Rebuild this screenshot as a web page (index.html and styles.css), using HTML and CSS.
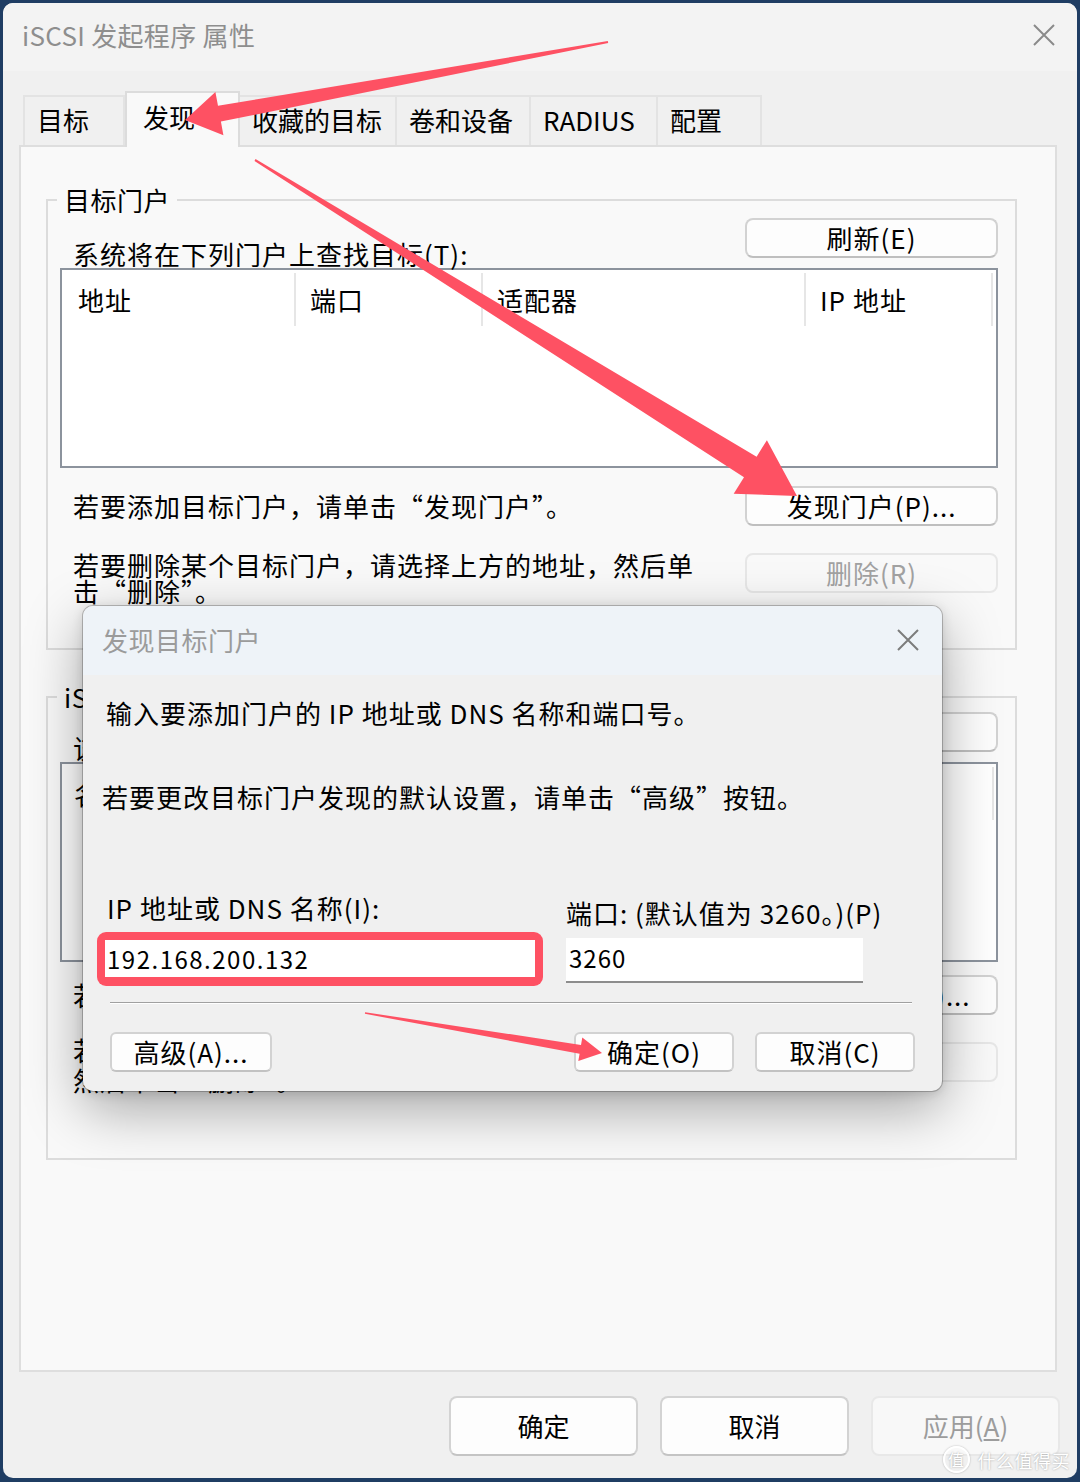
FILE: index.html
```html
<!DOCTYPE html>
<html lang="zh-CN">
<head>
<meta charset="utf-8">
<title>iSCSI 发起程序 属性</title>
<link rel="stylesheet" href="styles.css">
</head>
<body>
<div class="window">
  <header class="titlebar">
    <span class="title">iSCSI 发起程序 属性</span>
    <svg class="close" viewBox="0 0 22 22"><path d="M1 1L21 21M21 1L1 21"/></svg>
  </header>

  <div class="client">
    <nav class="tabs">
      <div class="tab">目标</div>
      <div class="tab tab--active">发现</div>
      <div class="tab">收藏的目标</div>
      <div class="tab">卷和设备</div>
      <div class="tab">RADIUS</div>
      <div class="tab">配置</div>
    </nav>

    <section class="panel">
      <fieldset class="group">
        <legend>目标门户</legend>
        <div class="row row--head">
          <span class="hint">系统将在下列门户上查找目标(T):</span>
          <button class="btn">刷新(E)</button>
        </div>
        <div class="list">
          <div class="list-head">
            <span class="col col--addr">地址</span>
            <span class="col col--port">端口</span>
            <span class="col col--adapter">适配器</span>
            <span class="col col--ip">IP 地址</span>
          </div>
        </div>
        <div class="row row--add">
          <span class="hint">若要添加目标门户，请单击“发现门户”。</span>
          <button class="btn">发现门户(P)...</button>
        </div>
        <div class="row row--del">
          <span class="hint hint--wrap">若要删除某个目标门户，请选择上方的地址，然后单击“删除”。</span>
          <button class="btn" disabled>删除(R)</button>
        </div>
      </fieldset>

      <fieldset class="group group--isns">
        <legend>iSNS 服务器</legend>
        <div class="row row--head">
          <span class="hint">该系统已在下列 iSNS 服务器上注册(I):</span>
          <button class="btn">刷新(F)</button>
        </div>
        <div class="list">
          <div class="list-head">
            <span class="col col--name">名称</span>
          </div>
        </div>
        <div class="row row--add">
          <span class="hint">若要添加 iSNS 服务器，请单击“添加服务器”。</span>
          <button class="btn">添加服务器(D)...</button>
        </div>
        <div class="row row--del">
          <span class="hint hint--wrap">若要删除某个 iSNS 服务器，请选择上方的服务器，<br>然后单击“删除”。</span>
          <button class="btn" disabled>删除(M)</button>
        </div>
      </fieldset>
    </section>

    <footer class="actions">
      <button class="fbtn">确定</button>
      <button class="fbtn">取消</button>
      <button class="fbtn" disabled>应用(<u>A</u>)</button>
    </footer>
  </div>

  <div class="dialog">
    <div class="dlg-title">
      <span class="dlg-caption">发现目标门户</span>
      <svg class="dlg-close" viewBox="0 0 22 22"><path d="M1 1L21 21M21 1L1 21"/></svg>
    </div>
    <div class="dlg-body">
      <p class="dlg-text dlg-text--first">输入要添加门户的 IP 地址或 DNS 名称和端口号。</p>
      <p class="dlg-text dlg-text--second">若要更改目标门户发现的默认设置，请单击“高级”按钮。</p>
      <div class="fields">
        <div class="field field--ip">
          <label class="field-label">IP 地址或 DNS 名称(I):</label>
          <div class="mark"><div class="input input--ip">192.168.200.132</div></div>
        </div>
        <div class="field field--port">
          <label class="field-label">端口: (默认值为 3260。)(P)</label>
          <div class="input input--port">3260</div>
        </div>
      </div>
      <div class="sep"></div>
      <div class="dlg-actions">
        <button class="dbtn">高级(A)...</button>
        <button class="dbtn dbtn--push">确定(O)</button>
        <button class="dbtn">取消(C)</button>
      </div>
    </div>
  </div>

  <div class="watermark">
    <span class="wm-badge">值</span>
    <span class="wm-text">什么值得买</span>
  </div>
</div>

<svg class="marks" viewBox="0 0 1080 1482" width="1080" height="1482">
  <polygon points="607.8,41 218,105.8 215.4,92 185,120 223.4,135.3 220.9,121.6 608.2,43"/>
  <polygon points="255.5,159.1 756.6,456.8 766.9,440.2 797,496 733.7,493.8 744,477.2 254.5,160.9"/>
  <polygon points="365.1,1012.2 581,1044.9 582.3,1037.5 602,1053 578.3,1061.1 579.6,1053.7 364.9,1013.8"/>
</svg>
</body>
</html>
```

FILE: styles.css
```css
* { box-sizing: border-box; }

html, body { margin: 0; }

body {
  position: relative;
  width: 1080px;
  height: 1482px;
  overflow: hidden;
  background: #1f3d63;
  font-family: "Noto Sans CJK SC", "Noto Sans", sans-serif;
  color: #000;
}

button { font-family: inherit; color: inherit; padding: 0; }

/* ---------- main window ---------- */
.window {
  position: relative;
  margin: 3px 0 0 3px;
  width: 1074px;
  height: 1475px;
  background: #f0f0f0;
  border-radius: 10px;
  overflow: hidden;
  display: flex;
  flex-direction: column;
}

.titlebar {
  flex: none;
  height: 68px;
  background: #f3f3f3;
  display: flex;
  align-items: center;
  justify-content: space-between;
  padding: 0 22px 4px 19px;
}

.title {
  font-size: 26px;
  line-height: 32px;
  color: #8e8e8e;
  letter-spacing: 0.3px;
}

.close {
  width: 22px;
  height: 22px;
  fill: none;
  stroke: #8a8a8a;
  stroke-width: 2;
}

.client {
  flex: 1;
  display: flex;
  flex-direction: column;
  padding: 20px 20px 0 16px;
}

/* ---------- tabs ---------- */
.tabs {
  position: relative;
  z-index: 1;
  display: grid;
  grid-template-columns: 102px 115px 157px 134px 127px 104px;
  align-items: end;
  height: 54px;
  margin-left: 4px;
}

.tab {
  height: 50px;
  border-top: 2px solid #e3e3e3;
  border-right: 2px solid #e3e3e3;
  background: #f0f0f0;
  font-size: 26px;
  line-height: 46px;
  padding-left: 12px;
  white-space: nowrap;
}

.tab:first-child { border-left: 2px solid #e3e3e3; }

.tab--active {
  height: 56px;
  margin-bottom: -2px;
  border: 2px solid #dcdcdc;
  border-bottom: none;
  background: #f9f9f9;
  padding-left: 16px;
  line-height: 48px;
}

/* ---------- tab page ---------- */
.panel {
  flex: none;
  height: 1227px;
  border: 2px solid #dedede;
  background: #f9f9f9;
  padding: 38px 38px 0 25px;
}

.group {
  margin: 0;
  min-width: 0;
  border: 2px solid #dcdcdc;
  padding: 3px 17px 44px 12px;
}

.group legend {
  margin-left: -3px;
  padding: 0 7px;
  font-size: 26px;
  line-height: 30px;
  letter-spacing: 0.5px;
}

.group--isns {
  margin-top: 32px;
  padding-top: 0;
  padding-bottom: 63px;
}

.row {
  display: flex;
  justify-content: space-between;
}

.row--head { align-items: flex-end; }
.row--head .btn { margin-bottom: 10px; }

.row--add {
  margin-top: 18px;
  align-items: center;
}

.group--isns .row--add { margin-top: 13px; }

.row--del {
  margin-top: 27px;
  align-items: flex-start;
}

/* dialog-font texts: wider pitch than the UI font */
.hint,
.col,
.btn,
.dlg-text,
.field-label,
.input,
.dbtn {
  letter-spacing: 1px;
}

.hint {
  padding-left: 13px;
  font-size: 26px;
  line-height: 28px;
  white-space: nowrap;
}

.hint--wrap {
  flex: none;
  width: 645px;
  white-space: normal;
  line-height: 26px;
  margin-top: -1px;
}

.group--isns .hint--wrap {
  line-height: 30px;
  margin-top: -7px;
}

.btn {
  flex: none;
  width: 253px;
  height: 40px;
  border: 2px solid #d2d2d2;
  border-bottom-color: #bfbfbf;
  border-radius: 8px;
  background: #fdfdfd;
  font-size: 26px;
  line-height: 34px;
}

.btn:disabled {
  background: #f9f9f9;
  border-color: #e7e7e7;
  color: #a2a2a2;
}

/* ---------- list view ---------- */
.list {
  height: 200px;
  border: 2px solid #8c939d;
  background: #fff;
}

.list-head { display: flex; }

.col {
  flex: none;
  margin-top: 3px;
  height: 53px;
  border-right: 2px solid #e6e6e6;
  padding-left: 14px;
  font-size: 26px;
  line-height: 53px;
  white-space: nowrap;
}

.col--addr { width: 234px; padding-left: 16px; }
.col--port { width: 187px; }
.col--adapter { width: 323px; }
.col--ip { width: 187px; }
.col--name { width: 932px; padding-left: 12px; }

/* ---------- bottom buttons ---------- */
.actions {
  display: flex;
  justify-content: flex-end;
  gap: 22px;
  margin: 24px -3px 0 0;
}

.fbtn {
  width: 189px;
  height: 60px;
  border: 2px solid #d3d3d3;
  border-bottom-color: #c4c4c4;
  border-radius: 8px;
  background: #fdfdfd;
  font-size: 26px;
  line-height: 54px;
}

.fbtn:disabled {
  background: #f8f8f8;
  border-color: #e8e8e8;
  color: #9c9c9c;
}

/* ---------- discovery dialog ---------- */
.dialog {
  position: absolute;
  left: 80px;
  top: 603px;
  z-index: 2;
  width: 859px;
  height: 485px;
  background: #f0f0f0;
  border-radius: 10px;
  overflow: hidden;
  box-shadow: 0 0 0 1px rgba(0, 0, 0, 0.22), 0 18px 56px rgba(0, 0, 0, 0.34), 0 2px 12px rgba(0, 0, 0, 0.14);
}

.dlg-title {
  height: 69px;
  background: #eef3f8;
  display: flex;
  align-items: center;
  justify-content: space-between;
  padding: 0 23px 2px 19px;
}

.dlg-caption {
  font-size: 26px;
  line-height: 30px;
  color: #9b9b9b;
  letter-spacing: 0.5px;
}

.dlg-close {
  width: 22px;
  height: 22px;
  fill: none;
  stroke: #7c7c7c;
  stroke-width: 2;
}

.dlg-body {
  padding: 23px 27px 19px 19px;
}

.dlg-text {
  margin: 0;
  font-size: 26px;
  line-height: 30px;
  white-space: nowrap;
}

.dlg-text--first { margin-left: 4px; }
.dlg-text--second { margin-top: 54px; }

.fields {
  display: flex;
  align-items: flex-start;
  margin-top: 81px;
}

.field-label {
  display: block;
  font-size: 26px;
  line-height: 30px;
  white-space: nowrap;
}

.field--ip {
  width: 430px;
  margin-left: 3px;
}

.field--ip .field-label { margin-left: 2px; }

.field--port {
  width: 297px;
  margin-left: 31px;
}

.field--port .field-label { padding-top: 5px; }

.mark {
  margin: 9px -8px 0;
  padding: 8px 8px 9px;
  background: #fe5163;
  border-radius: 9px;
}

.input {
  background: #fff;
  font-size: 24px;
  padding-left: 2px;
  white-space: nowrap;
}

.input--ip {
  height: 37px;
  line-height: 37px;
  letter-spacing: 1.5px;
}

.input--port {
  margin-top: 10px;
  height: 45px;
  line-height: 40px;
  border-bottom: 2px solid #8d8d8d;
  padding-left: 3px;
}

.sep {
  margin: 16px 3px 0 8px;
  height: 2px;
  border-top: 1px solid #a0a0a0;
  border-bottom: 1px solid #ffffff;
}

.dlg-actions {
  display: flex;
  gap: 21px;
  margin-top: 28px;
}

.dbtn {
  width: 160px;
  height: 40px;
  border: 2px solid #d2d2d2;
  border-bottom-color: #c2c2c2;
  border-radius: 6px;
  background: #fdfdfd;
  font-size: 26px;
  line-height: 34px;
}

.dbtn:first-child {
  width: 162px;
  margin-left: 8px;
}

.dbtn--push { margin-left: auto; }

/* ---------- watermark badge ---------- */
.watermark {
  position: absolute;
  right: 7px;
  bottom: 5px;
  z-index: 3;
  display: flex;
  align-items: center;
  gap: 8px;
  color: #fff;
  text-shadow: 0 0 2px rgba(0, 0, 0, 0.35);
}

.wm-badge {
  width: 27px;
  height: 27px;
  border: 2px solid #fff;
  border-radius: 50%;
  font-size: 16px;
  line-height: 23px;
  text-align: center;
  box-shadow: 0 0 2px rgba(0, 0, 0, 0.3);
}

.wm-text {
  font-size: 18px;
  line-height: 26px;
  letter-spacing: 0.5px;
}

/* ---------- red pointer arrows ---------- */
.marks {
  position: absolute;
  left: 0;
  top: 0;
  z-index: 10;
  pointer-events: none;
  fill: #fe5163;
}
```
